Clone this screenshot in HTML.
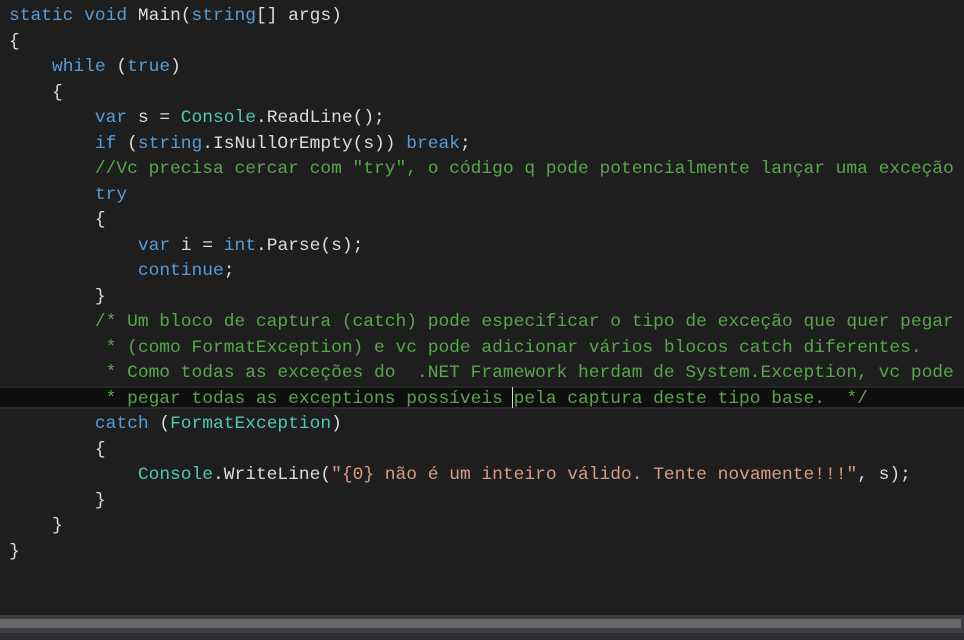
<!DOCTYPE html>
<html><head><meta charset="utf-8"><style>
html,body{margin:0;padding:0;width:964px;height:640px;overflow:hidden;background:#1e1e1e}
.code{position:absolute;left:9px;top:4px;font-family:"Liberation Mono",monospace;font-size:17.9px;line-height:25.5px;color:#dcdcdc;white-space:pre}
.k{color:#569cd6}.t{color:#4ec9b0}.c{color:#57a64a}.s{color:#d69d85}
.hl{position:absolute;left:0;top:386px;width:964px;height:19px;background:#0f0f0f;border-top:2px solid #282828;border-bottom:2px solid #282828}
.caret{position:absolute;left:512px;top:387px;width:1px;height:21px;background:#dcdcdc}
.sb{position:absolute;left:0;top:615px;width:964px;height:18px;background:#3e3e42}
.th{position:absolute;left:0;top:619px;width:961px;height:9px;background:#686868}
.bt{position:absolute;left:0;top:633px;width:964px;height:7px;background:#2d2d30}
</style></head><body>
<div class="hl"></div>
<div class="code"><span class="k">static</span> <span class="k">void</span> Main(<span class="k">string</span>[] args)
{
    <span class="k">while</span> (<span class="k">true</span>)
    {
        <span class="k">var</span> s = <span class="t">Console</span>.ReadLine();
        <span class="k">if</span> (<span class="k">string</span>.IsNullOrEmpty(s)) <span class="k">break</span>;
        <span class="c">//Vc precisa cercar com "try", o código q pode potencialmente lançar uma exceção</span>
        <span class="k">try</span>
        {
            <span class="k">var</span> i = <span class="k">int</span>.Parse(s);
            <span class="k">continue</span>;
        }
        <span class="c">/* Um bloco de captura (catch) pode especificar o tipo de exceção que quer pegar
         * (como FormatException) e vc pode adicionar vários blocos catch diferentes.
         * Como todas as exceções do  .NET Framework herdam de System.Exception, vc pode
         * pegar todas as exceptions possíveis pela captura deste tipo base.  */</span>
        <span class="k">catch</span> (<span class="t">FormatException</span>)
        {
            <span class="t">Console</span>.WriteLine(<span class="s">"{0} não é um inteiro válido. Tente novamente!!!"</span>, s);
        }
    }
}</div>
<div class="caret"></div>
<div class="sb"></div><div class="th"></div><div class="bt"></div>
</body></html>
